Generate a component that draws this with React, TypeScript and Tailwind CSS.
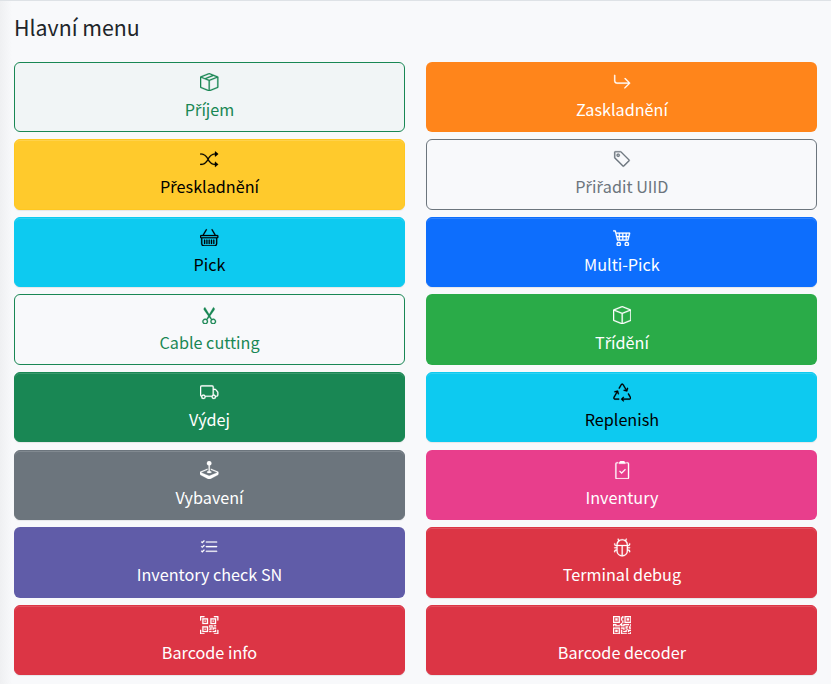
import type { IconType } from "react-icons";
import {
  BsArrowReturnRight, BsBasket, BsBox, BsBoxSeam, BsBug, BsCart4, BsClipboard2Check, BsJoystick,
  BsListCheck, BsQrCode, BsQrCodeScan, BsRecycle, BsScissors, BsShuffle, BsTag, BsTruck,
} from "react-icons/bs";

type Item = { label: string; icon: IconType; style: string };

const solid = "border shadow-[inset_0_1px_0_rgba(255,255,255,0.15),0_1px_1px_rgba(0,0,0,0.075)]";
const outline = "border";

const items: Item[] = [
  { label: "Příjem", icon: BsBoxSeam, style: `${outline} border-[#198754] bg-[#f1f5f6] text-[#198754]` },
  { label: "Zaskladnění", icon: BsArrowReturnRight, style: "bg-[#ff851b] text-white" },
  { label: "Přeskladnění", icon: BsShuffle, style: `${solid} border-[#ffc720] bg-[#ffca2c] text-black` },
  { label: "Přiřadit UIID", icon: BsTag, style: `${outline} border-[#6c757d] text-[#6c757d]` },
  { label: "Pick", icon: BsBasket, style: `${solid} border-[#0dcaf0] bg-[#0dcaf0] text-black` },
  { label: "Multi-Pick", icon: BsCart4, style: `${solid} border-[#0d6efd] bg-[#0d6efd] text-white` },
  { label: "Cable cutting", icon: BsScissors, style: `${outline} border-[#198754] text-[#198754]` },
  { label: "Třídění", icon: BsBox, style: "bg-[#2aab48] text-white" },
  { label: "Výdej", icon: BsTruck, style: `${solid} border-[#198754] bg-[#198754] text-white` },
  { label: "Replenish", icon: BsRecycle, style: `${solid} border-[#0dcaf0] bg-[#0dcaf0] text-black` },
  { label: "Vybavení", icon: BsJoystick, style: `${solid} border-[#6c757d] bg-[#6c757d] text-white` },
  { label: "Inventury", icon: BsClipboard2Check, style: "bg-[#e83e8c] text-white" },
  { label: "Inventory check SN", icon: BsListCheck, style: "bg-[#605ca8] text-white" },
  { label: "Terminal debug", icon: BsBug, style: `${solid} border-[#dc3545] bg-[#dc3545] text-white` },
  { label: "Barcode info", icon: BsQrCodeScan, style: `${solid} border-[#dc3545] bg-[#dc3545] text-white` },
  { label: "Barcode decoder", icon: BsQrCode, style: `${solid} border-[#dc3545] bg-[#dc3545] text-white` },
];

// The CJK family has no "ř" glyph, so that letter is set in Noto Sans.
function Label({ text }: { text: string }) {
  return (
    <>
      {text.split(/(ř)/).map((part, i) =>
        part === "ř" ? (
          <span key={i} className="font-['Noto_Sans',sans-serif] tracking-[-0.3px]">{part}</span>
        ) : (
          part
        ),
      )}
    </>
  );
}

function MenuButton({ label, icon: Icon, style }: Item) {
  return (
    <button className={`flex h-[70.35px] w-full flex-col items-center rounded-[6px] ${style.includes("border") ? "pt-[10.2px]" : "pt-[11.2px]"} ${style}`}>
      <Icon className="size-[18.4px] shrink-0 stroke-current stroke-[0.2px]" />
      <span className="mt-[4.6px] h-[26px] text-[16.2px] leading-[26px] whitespace-nowrap">
        <Label text={label} />
      </span>
    </button>
  );
}

export default function App() {
  return (
    <main className="h-[684px] overflow-hidden border-t border-[#dee2e6] bg-[#f8f9fb] bg-[linear-gradient(to_right,#eff0f2_0,#f8f9fb_12px)] pr-[13.6px] pl-[14px] pt-[11px] font-['Noto_Sans_CJK_SC','Noto_Sans',sans-serif]">
      <h1 className="h-[49.66px] text-[21.3px] leading-[30px] text-[#212529]">Hlavní menu</h1>
      <div className="grid grid-cols-2 gap-x-[21.4px] gap-y-[7.25px]">
        {items.map((item) => (
          <MenuButton key={item.label} {...item} />
        ))}
      </div>
    </main>
  );
}
